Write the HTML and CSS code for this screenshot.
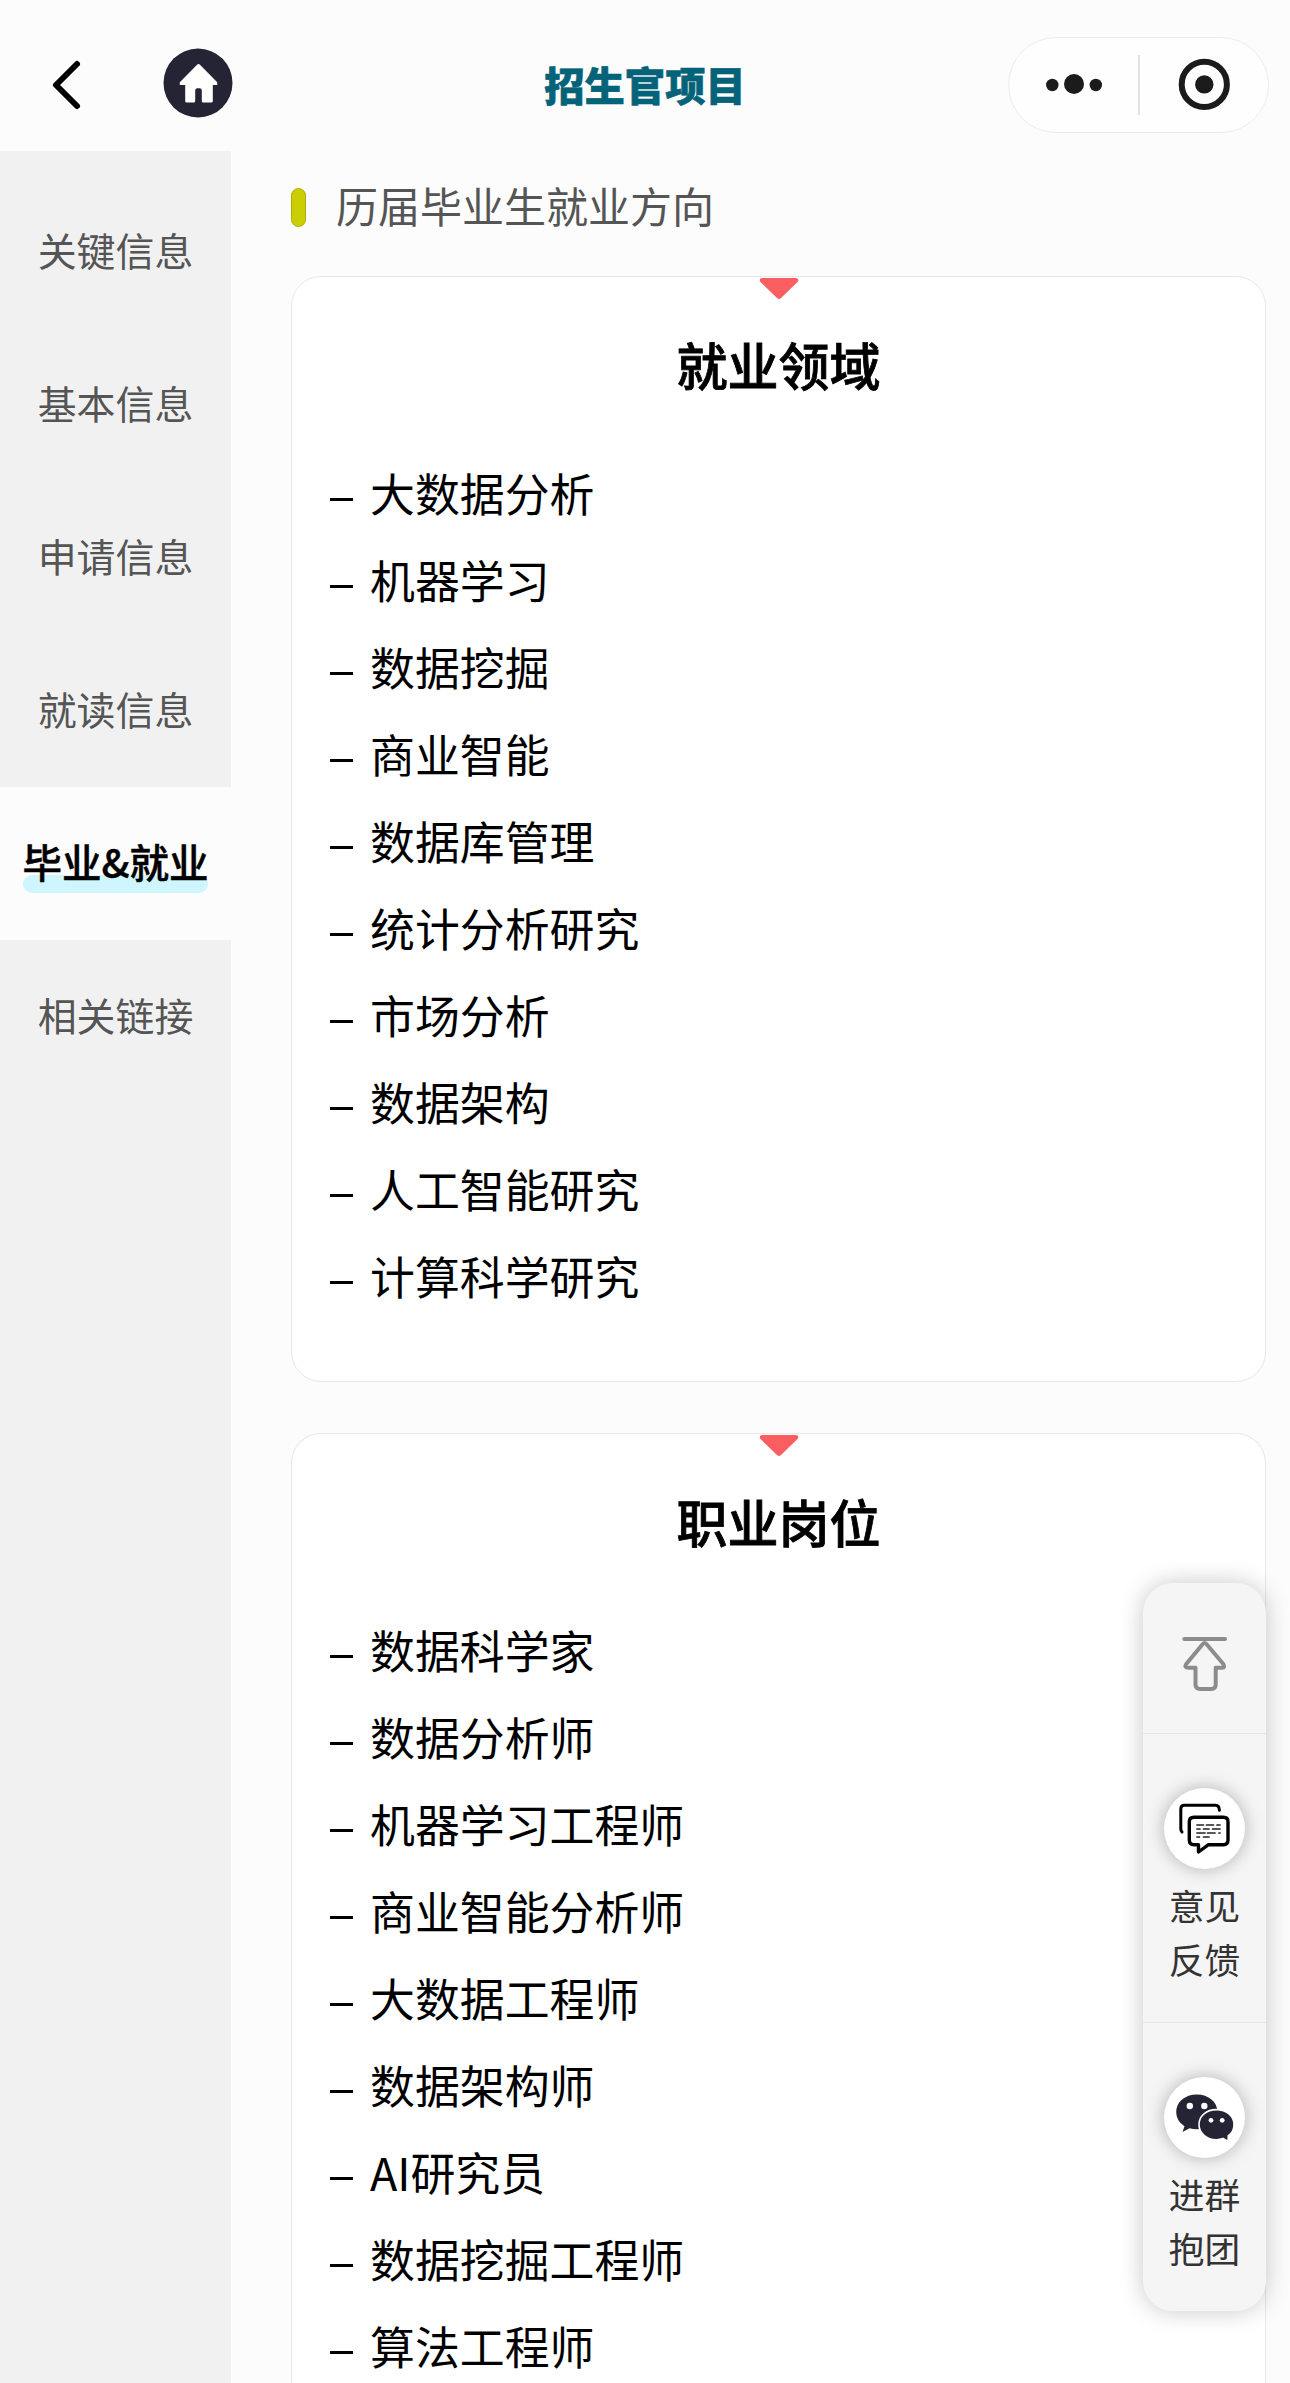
FILE: index.html
```html
<!DOCTYPE html>
<html lang="zh-CN">
<head>
<meta charset="utf-8">
<title>招生官项目</title>
<link rel="stylesheet" href="styles.css">
</head>
<body>
<header class="navbar">
  <svg class="back" width="32" height="54" viewBox="0 0 32 54"><path d="M27 6 L6 27 L27 48" fill="none" stroke="#000" stroke-width="6" stroke-linecap="round" stroke-linejoin="round"/></svg>
  <svg class="home" width="70" height="70" viewBox="0 0 70 70"><circle cx="35" cy="35" r="34.5" fill="#252435"/><path d="M34.3 16.6 Q35.5 15.4 36.7 16.6 L54.2 34.3 V37 H49.8 V53 Q49.8 54.6 48.2 54.6 H40.3 Q38.8 54.6 38.8 53 V42.5 Q38.8 40.3 36.6 40.3 H34.4 Q32.2 40.3 32.2 42.5 V53 Q32.2 54.6 30.7 54.6 H23.8 Q22.2 54.6 22.2 53 V37 H16.8 V34.3 Z" fill="#fff"/></svg>
  <h1 class="page-title">招生官项目</h1>
  <div class="capsule">
    <svg width="259" height="94" viewBox="1 1 259 94"><g fill="#1b1b1b"><circle cx="44.3" cy="48" r="6.2"/><circle cx="66" cy="47" r="10"/><circle cx="87.8" cy="48" r="6.2"/><circle cx="196.3" cy="47.4" r="9.2"/></g><rect x="130" y="18" width="2" height="60" fill="#e2e2e2"/><circle cx="196.3" cy="47.4" r="22.6" fill="none" stroke="#1b1b1b" stroke-width="6"/></svg>
  </div>
</header>
<div class="layout">
  <nav class="sidebar">
    <a class="tab">关键信息</a>
    <a class="tab">基本信息</a>
    <a class="tab">申请信息</a>
    <a class="tab">就读信息</a>
    <a class="tab active"><span class="mark">毕业&amp;就业</span></a>
    <a class="tab">相关链接</a>
  </nav>
  <main class="content">
    <h2 class="section-title"><i class="pill"></i>历届毕业生就业方向</h2>
    <section class="card">
      <svg class="notch" width="40" height="22" viewBox="0 0 40 22"><path d="M2.8 0 H37.2 Q39.3 .3 39.3 2.2 Q39.3 3.6 38 4.6 L22 20 Q20 22 18 20 L2 4.6 Q.7 3.6 .7 2.2 Q.7 .3 2.8 0Z" fill="#fb5e60"/></svg>
      <h3 class="card-title">就业领域</h3>
      <ul class="list">
        <li>大数据分析</li>
        <li>机器学习</li>
        <li>数据挖掘</li>
        <li>商业智能</li>
        <li>数据库管理</li>
        <li>统计分析研究</li>
        <li>市场分析</li>
        <li>数据架构</li>
        <li>人工智能研究</li>
        <li>计算科学研究</li>
      </ul>
    </section>
    <section class="card card-last">
      <svg class="notch" width="40" height="22" viewBox="0 0 40 22"><path d="M2.8 0 H37.2 Q39.3 .3 39.3 2.2 Q39.3 3.6 38 4.6 L22 20 Q20 22 18 20 L2 4.6 Q.7 3.6 .7 2.2 Q.7 .3 2.8 0Z" fill="#fb5e60"/></svg>
      <h3 class="card-title">职业岗位</h3>
      <ul class="list">
        <li>数据科学家</li>
        <li>数据分析师</li>
        <li>机器学习工程师</li>
        <li>商业智能分析师</li>
        <li>大数据工程师</li>
        <li>数据架构师</li>
        <li>AI研究员</li>
        <li>数据挖掘工程师</li>
        <li>算法工程师</li>
      </ul>
    </section>
  </main>
</div>
<aside class="dock">
  <div class="dock-item dock-top">
    <svg width="46" height="56" viewBox="0 0 46 56" fill="none" stroke="#8c8c8c" stroke-width="4" stroke-linecap="round" stroke-linejoin="round"><path d="M2.3 3 H43"/><path d="M20.8 8 Q22.6 6 24.4 8 L41.3 28 Q43.5 31.6 40 31.8 H33.7 V48.5 Q33.7 53 29.2 53 H18 Q13.5 53 13.5 48.5 V31.8 H6 Q2 31.6 4.2 28 Z"/></svg>
  </div>
  <div class="dock-item">
    <div class="bubble">
      <svg width="81" height="81" viewBox="0 0 81 81" fill="none" stroke="#000" stroke-linecap="round" stroke-linejoin="round"><path d="M18 44 Q16.8 43 16.8 41 V21 Q16.8 17.3 20.5 17.3 H51.5 Q55.4 17.3 55.4 22.3" stroke-width="3"/><path d="M30 29.3 H59.5 Q64 29.3 64 33.8 V52 Q64 56.7 59.5 56.7 H44.5 L34.5 64 V56.7 H30 Q25.3 56.7 25.3 52 V33.8 Q25.3 29.3 30 29.3Z" stroke-width="3.4"/><g stroke="#222" stroke-width="1.7"><path d="M33 37H39.5M42.5 37H49.5M53 37H56"/><path d="M33 41H36M39.5 41H45M48.5 41H56"/><path d="M33 45H41M43.5 45H51M55 45H56"/><path d="M33 49H35.5M39.5 49H45"/></g></svg>
    </div>
    <p class="dock-label">意见<br>反馈</p>
  </div>
  <div class="dock-item">
    <div class="bubble">
      <svg width="81" height="81" viewBox="0 0 81 81"><path d="M12.2 35 C12.2 25 21 17.5 32.8 17.5 C44.5 17.5 53.5 25 53.5 35 C53.5 45 44.5 52.3 32.8 52.3 Q29.5 52.3 25.5 51.3 L18.5 55 L20.5 49.3 Q12.2 44 12.2 35Z" fill="#252435"/><path d="M35 47.5 C35 39 42.5 32.6 52.4 32.6 C62.5 32.6 70 39 70 47.5 Q70 55 64.3 58.7 L64 64.5 L59 61.5 Q56 62.7 52.4 62.7 C42.500 62.7 35 56 35 47.5Z" fill="#252435" stroke="#fff" stroke-width="1.6"/><g fill="#fff"><circle cx="25.8" cy="29" r="3.2"/><circle cx="40.3" cy="29" r="3.2"/><circle cx="47" cy="43.3" r="2.4"/><circle cx="58.2" cy="43.3" r="2.4"/></g></svg>
    </div>
    <p class="dock-label">进群<br>抱团</p>
  </div>
</aside>
</body>
</html>
```
FILE: styles.css
```css
* { box-sizing: border-box; }
html, body { height: 2383px; overflow: hidden; }
body {
  margin: 0;
  display: flex;
  flex-direction: column;
  background: #fcfcfc;
  color: #000;
  font-family: "Noto Sans CJK SC", sans-serif;
}
h1, h2, h3, p, ul { margin: 0; padding: 0; }
svg { display: block; }

.navbar {
  flex: none;
  height: 151px;
  display: grid;
  grid-template-columns: 163px 180px 604px 1fr;
  align-items: start;
}
.back { margin: 58px 0 0 50px; }
.home { margin-top: 48px; }
.page-title {
  margin-top: 54px;
  text-align: center;
  font-size: 40.3px;
  line-height: 60px;
  font-weight: 900;
  color: #046379;
  -webkit-text-stroke: .6px #046379;
}
.capsule {
  width: 261px;
  height: 96px;
  margin: 37px 0 0 61px;
  border: 1px solid #ececec;
  border-radius: 48px;
  background: #fefefe;
}

.layout { flex: 1; min-height: 0; display: flex; }
.sidebar {
  width: 231px;
  flex: none;
  padding-top: 24px;
  background: #f1f1f1;
}
.tab {
  height: 153px;
  padding-bottom: 6px;
  display: flex;
  align-items: center;
  justify-content: center;
  font-size: 38.9px;
  font-weight: 400;
  color: #555;
}
.active {
  background: #fcfcfc;
  color: #000;
  font-size: 39.5px;
  font-weight: 500;
  -webkit-text-stroke: .5px #000;
}
.mark {
  position: relative;
  z-index: 0;
  line-height: 58px;
}
.mark::before {
  content: "";
  position: absolute;
  z-index: -1;
  left: 0;
  right: 0;
  bottom: -3px;
  height: 18px;
  border-radius: 9px;
  background: #cff6fe;
}

.content {
  flex: 1;
  padding: 0 24px 0 60px;
  display: flex;
  flex-direction: column;
}
.section-title {
  flex: none;
  height: 125px;
  padding-top: 22px;
  display: flex;
  gap: 30px;
  font-size: 42px;
  line-height: 64px;
  font-weight: 400;
  color: #555;
}
.pill {
  width: 15px;
  height: 39px;
  margin-top: 15px;
  border: 1px solid #adb000;
  border-radius: 8px;
  background: #cbce02;
}
.card {
  flex: none;
  height: 1106px;
  margin-bottom: 51px;
  padding: 0 38px;
  border: 1px solid #e8e8e8;
  border-radius: 30px;
  background: #fff;
}
.card-last {
  flex: 1 1 0;
  height: auto;
  min-height: 0;
  margin-bottom: 0;
  border-bottom: 0;
  border-radius: 30px 30px 0 0;
  overflow: hidden;
}
.notch { margin: 1px auto 0; }
.card-title {
  margin-top: 26px;
  text-align: center;
  font-size: 51px;
  line-height: 76px;
  font-weight: 500;
  -webkit-text-stroke: .8px #000;
}
.list { margin-top: 47px; list-style: none; }
.list li {
  height: 87px;
  display: flex;
  align-items: center;
  font-size: 44.9px;
  line-height: 87px;
  font-weight: 400;
}
.list li::before {
  content: "";
  width: 23px;
  height: 3px;
  margin: 13px 17px 0 0;
  background: #000;
}

.dock {
  position: absolute;
  left: 1143px;
  top: 1583px;
  width: 123px;
  height: 728px;
  border-radius: 30px;
  background: #f5f5f5;
  box-shadow: 0 0 24px rgba(0, 0, 0, .22);
}
.dock-item {
  height: 289px;
  padding-top: 54px;
  border-bottom: 1px solid #e6e6e6;
  display: flex;
  flex-direction: column;
  align-items: center;
}
.dock-top { height: 151px; padding-top: 53px; }
.dock-item:last-child { border: 0; }
.bubble {
  width: 81px;
  height: 81px;
  border-radius: 50%;
  background: #fff;
  box-shadow: 0 0 18px rgba(0, 0, 0, .28);
}
.dock-label {
  margin-top: 9px;
  font-size: 35.7px;
  line-height: 54px;
  font-weight: 400;
  color: #333;
}
```
